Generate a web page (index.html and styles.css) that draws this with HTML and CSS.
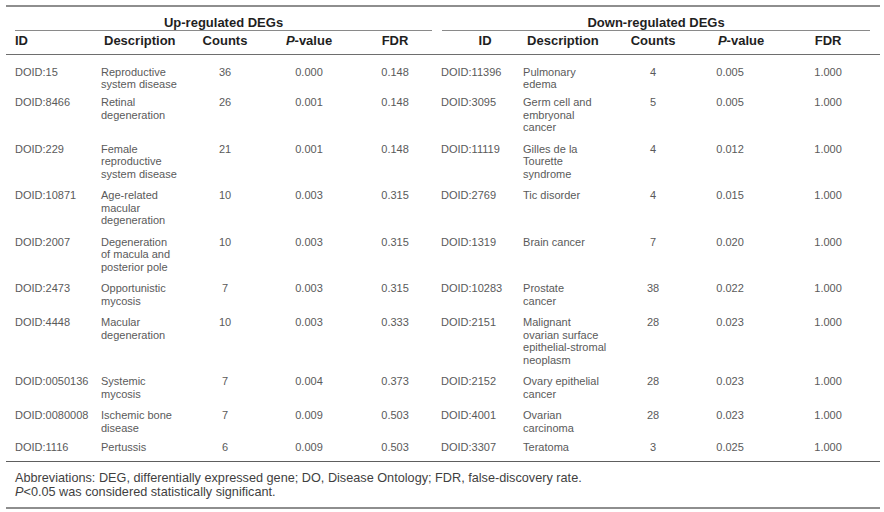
FILE: index.html
```html
<!DOCTYPE html>
<html lang="en">
<head>
<meta charset="utf-8">
<title>DO enrichment of DEGs</title>
<link rel="stylesheet" href="styles.css">
</head>
<body>
<div class="page">
  <table class="deg">
    <colgroup>
      <col class="w-id-l"><col class="w-desc-l"><col class="w-cnt-l"><col class="w-p-l"><col class="w-fdr-l">
      <col class="w-id-r"><col class="w-desc-r"><col class="w-cnt-r"><col class="w-p-r"><col class="w-fdr-r">
    </colgroup>
    <thead>
      <tr class="group">
        <th colspan="5" class="g-left"><div class="g-line">Up-regulated DEGs</div></th>
        <th colspan="5" class="g-right"><div class="g-line">Down-regulated DEGs</div></th>
      </tr>
      <tr class="cols">
        <th class="h-id-l">ID</th>
        <th class="h-desc-l">Description</th>
        <th class="h-num">Counts</th>
        <th class="h-num"><i>P</i>-value</th>
        <th class="h-num">FDR</th>
        <th class="h-id-r">ID</th>
        <th class="h-desc-r">Description</th>
        <th class="h-num">Counts</th>
        <th class="h-num h-p-r"><i>P</i>-value</th>
        <th class="h-num h-fdr-r">FDR</th>
      </tr>
    </thead>
    <tbody>
      <tr class="first">
        <td class="id-l">DOID:15</td><td class="desc">Reproductive<br>system disease</td><td class="num">36</td><td class="num">0.000</td><td class="num">0.148</td>
        <td class="id-r">DOID:11396</td><td class="desc">Pulmonary<br>edema</td><td class="num">4</td><td class="num p-r">0.005</td><td class="num fdr-r">1.000</td>
      </tr>
      <tr>
        <td class="id-l">DOID:8466</td><td class="desc">Retinal<br>degeneration</td><td class="num">26</td><td class="num">0.001</td><td class="num">0.148</td>
        <td class="id-r">DOID:3095</td><td class="desc">Germ cell and<br>embryonal<br>cancer</td><td class="num">5</td><td class="num p-r">0.005</td><td class="num fdr-r">1.000</td>
      </tr>
      <tr>
        <td class="id-l">DOID:229</td><td class="desc">Female<br>reproductive<br>system disease</td><td class="num">21</td><td class="num">0.001</td><td class="num">0.148</td>
        <td class="id-r">DOID:11119</td><td class="desc">Gilles de la<br>Tourette<br>syndrome</td><td class="num">4</td><td class="num p-r">0.012</td><td class="num fdr-r">1.000</td>
      </tr>
      <tr>
        <td class="id-l">DOID:10871</td><td class="desc">Age-related<br>macular<br>degeneration</td><td class="num">10</td><td class="num">0.003</td><td class="num">0.315</td>
        <td class="id-r">DOID:2769</td><td class="desc">Tic disorder</td><td class="num">4</td><td class="num p-r">0.015</td><td class="num fdr-r">1.000</td>
      </tr>
      <tr>
        <td class="id-l">DOID:2007</td><td class="desc">Degeneration<br>of macula and<br>posterior pole</td><td class="num">10</td><td class="num">0.003</td><td class="num">0.315</td>
        <td class="id-r">DOID:1319</td><td class="desc">Brain cancer</td><td class="num">7</td><td class="num p-r">0.020</td><td class="num fdr-r">1.000</td>
      </tr>
      <tr>
        <td class="id-l">DOID:2473</td><td class="desc">Opportunistic<br>mycosis</td><td class="num">7</td><td class="num">0.003</td><td class="num">0.315</td>
        <td class="id-r">DOID:10283</td><td class="desc">Prostate<br>cancer</td><td class="num">38</td><td class="num p-r">0.022</td><td class="num fdr-r">1.000</td>
      </tr>
      <tr>
        <td class="id-l">DOID:4448</td><td class="desc">Macular<br>degeneration</td><td class="num">10</td><td class="num">0.003</td><td class="num">0.333</td>
        <td class="id-r">DOID:2151</td><td class="desc">Malignant<br>ovarian surface<br>epithelial-stromal<br>neoplasm</td><td class="num">28</td><td class="num p-r">0.023</td><td class="num fdr-r">1.000</td>
      </tr>
      <tr>
        <td class="id-l">DOID:0050136</td><td class="desc">Systemic<br>mycosis</td><td class="num">7</td><td class="num">0.004</td><td class="num">0.373</td>
        <td class="id-r">DOID:2152</td><td class="desc">Ovary epithelial<br>cancer</td><td class="num">28</td><td class="num p-r">0.023</td><td class="num fdr-r">1.000</td>
      </tr>
      <tr class="penult">
        <td class="id-l">DOID:0080008</td><td class="desc">Ischemic bone<br>disease</td><td class="num">7</td><td class="num">0.009</td><td class="num">0.503</td>
        <td class="id-r">DOID:4001</td><td class="desc">Ovarian<br>carcinoma</td><td class="num">28</td><td class="num p-r">0.023</td><td class="num fdr-r">1.000</td>
      </tr>
      <tr class="last">
        <td class="id-l">DOID:1116</td><td class="desc">Pertussis</td><td class="num">6</td><td class="num">0.009</td><td class="num">0.503</td>
        <td class="id-r">DOID:3307</td><td class="desc">Teratoma</td><td class="num">3</td><td class="num p-r">0.025</td><td class="num fdr-r">1.000</td>
      </tr>
    </tbody>
  </table>
  <div class="notes">
    <p>Abbreviations: DEG, differentially expressed gene; DO, Disease Ontology; FDR, false-discovery rate.</p>
    <p><i>P</i>&lt;0.05 was considered statistically significant.</p>
  </div>
</div>
</body>
</html>
```

FILE: styles.css
```css
html, body {
  margin: 0;
  padding: 0;
  background: #ffffff;
}

body {
  font-family: "Liberation Sans", Arial, sans-serif;
}

.page {
  width: 874px;
  padding: 5px 4px 0 6px;
}

.deg {
  width: 874px;
  table-layout: fixed;
  border-collapse: collapse;
  border-top: 2px solid #8e8e8e;
}

.w-id-l { width: 95px; }
.w-desc-l { width: 89px; }
.w-cnt-l { width: 70px; }
.w-p-l { width: 98px; }
.w-fdr-l { width: 74px; }
.w-id-r { width: 91px; }
.w-desc-r { width: 92px; }
.w-cnt-r { width: 76px; }
.w-p-r { width: 89px; }
.w-fdr-r { width: 100px; }

th {
  font-weight: bold;
  font-size: 13px;
  line-height: 15px;
  color: #1f1f1f;
  white-space: nowrap;
}

.group th {
  padding: 8px 0 0 0;
  text-align: center;
}

.g-left {
  padding-left: 9px !important;
}

.g-right {
  padding-left: 10px !important;
  padding-right: 10px !important;
}

.g-line {
  border-bottom: 1px solid #8a8a8a;
}

.cols th {
  padding: 2px 0 6px 0;
  border-bottom: 1px solid #6e6e6e;
  text-align: left;
}

.cols .h-id-l { padding-left: 9px; }
.cols .h-desc-l { padding-left: 3px; }
.cols .h-num { text-align: center; }
.cols .h-id-r { text-align: center; padding-left: 15px; }
.cols .h-desc-r { padding-left: 4px; }
.cols .h-p-r { padding-left: 11px; }
.cols .h-fdr-r { padding-right: 4px; }

td {
  font-size: 11px;
  line-height: 12.5px;
  color: #5a5a5a;
  vertical-align: top;
  padding: 4.5px 0;
  white-space: nowrap;
}

.first td {
  padding-top: 10.5px;
  padding-bottom: 1px;
}

.penult td {
  padding-bottom: 2.5px;
}

.last td {
  padding-bottom: 7px;
}

td.id-l { padding-left: 9px; }
td.id-r { padding-left: 9px; }
td.num { text-align: center; }
td.p-r { padding-right: 11px; }
td.fdr-r { padding-right: 4px; }

.notes {
  border-top: 1px solid #5e5e5e;
  border-bottom: 2px solid #8e8e8e;
  padding: 9px 0 8px 9px;
}

.notes p {
  margin: 0;
  font-size: 12.7px;
  line-height: 14px;
  color: #3f3f3f;
}
```
